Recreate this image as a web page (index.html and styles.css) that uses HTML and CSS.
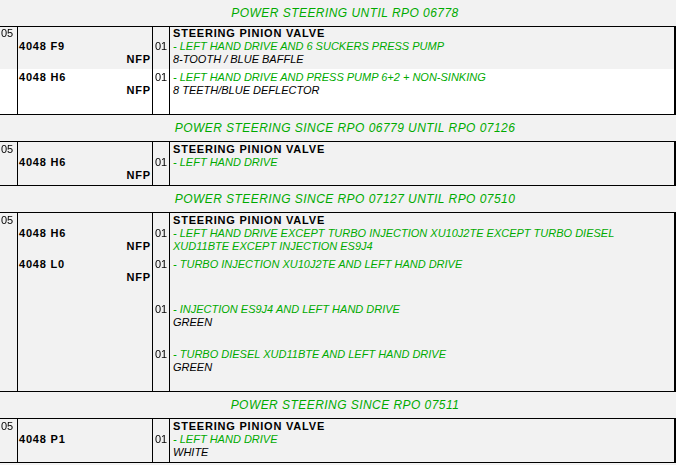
FILE: index.html
```html
<!DOCTYPE html>
<html>
<head>
<meta charset="utf-8">
<link rel="stylesheet" href="styles.css">
</head>
<body>
<div class="page">
  <div class="title">POWER STEERING UNTIL RPO 06778</div>
  <div class="tbl">
    <div class="row first short">
      <div class="c lvl"><div class="ln">05</div></div>
      <div class="c ref"><div class="ln"></div><div class="ln b">4048 F9</div><div class="ln b r">NFP</div></div>
      <div class="c qty"><div class="ln"></div><div class="ln">01</div></div>
      <div class="c desc"><div class="ln b">STEERING PINION VALVE</div><div class="ln g">- LEFT HAND DRIVE AND 6 SUCKERS PRESS PUMP</div><div class="ln k">8-TOOTH / BLUE BAFFLE</div></div>
    </div>
    <div class="row item white">
      <div class="c lvl"></div>
      <div class="c ref"><div class="ln b">4048 H6</div><div class="ln b r">NFP</div></div>
      <div class="c qty"><div class="ln">01</div></div>
      <div class="c desc"><div class="ln g">- LEFT HAND DRIVE AND PRESS PUMP 6+2 + NON-SINKING</div><div class="ln k">8 TEETH/BLUE DEFLECTOR</div></div>
    </div>
  </div>

  <div class="title">POWER STEERING SINCE RPO 06779 UNTIL RPO 07126</div>
  <div class="tbl">
    <div class="row first">
      <div class="c lvl"><div class="ln">05</div></div>
      <div class="c ref"><div class="ln"></div><div class="ln b">4048 H6</div><div class="ln b r">NFP</div></div>
      <div class="c qty"><div class="ln"></div><div class="ln">01</div></div>
      <div class="c desc"><div class="ln b">STEERING PINION VALVE</div><div class="ln g">- LEFT HAND DRIVE</div></div>
    </div>
  </div>

  <div class="title">POWER STEERING SINCE RPO 07127 UNTIL RPO 07510</div>
  <div class="tbl">
    <div class="row first">
      <div class="c lvl"><div class="ln">05</div></div>
      <div class="c ref"><div class="ln"></div><div class="ln b">4048 H6</div><div class="ln b r">NFP</div></div>
      <div class="c qty"><div class="ln"></div><div class="ln">01</div></div>
      <div class="c desc"><div class="ln b">STEERING PINION VALVE</div><div class="ln g">- LEFT HAND DRIVE EXCEPT TURBO INJECTION XU10J2TE EXCEPT TURBO DIESEL</div><div class="ln g">XUD11BTE EXCEPT INJECTION ES9J4</div></div>
    </div>
    <div class="row item">
      <div class="c lvl"></div>
      <div class="c ref"><div class="ln b">4048 L0</div><div class="ln b r">NFP</div></div>
      <div class="c qty"><div class="ln">01</div></div>
      <div class="c desc"><div class="ln g">- TURBO INJECTION XU10J2TE AND LEFT HAND DRIVE</div></div>
    </div>
    <div class="row item">
      <div class="c lvl"></div>
      <div class="c ref"></div>
      <div class="c qty"><div class="ln">01</div></div>
      <div class="c desc"><div class="ln g">- INJECTION ES9J4 AND LEFT HAND DRIVE</div><div class="ln k">GREEN</div></div>
    </div>
    <div class="row item">
      <div class="c lvl"></div>
      <div class="c ref"></div>
      <div class="c qty"><div class="ln">01</div></div>
      <div class="c desc"><div class="ln g">- TURBO DIESEL XUD11BTE AND LEFT HAND DRIVE</div><div class="ln k">GREEN</div></div>
    </div>
  </div>

  <div class="title">POWER STEERING SINCE RPO 07511</div>
  <div class="tbl">
    <div class="row first">
      <div class="c lvl"><div class="ln">05</div></div>
      <div class="c ref"><div class="ln"></div><div class="ln b">4048 P1</div></div>
      <div class="c qty"><div class="ln"></div><div class="ln">01</div></div>
      <div class="c desc"><div class="ln b">STEERING PINION VALVE</div><div class="ln g">- LEFT HAND DRIVE</div><div class="ln k">WHITE</div></div>
    </div>
  </div>
</div>
</body>
</html>
```

FILE: styles.css
```css
html, body {
  margin: 0;
  padding: 0;
  background: #f2f2f2;
}
body {
  font-family: "Liberation Sans", Arial, sans-serif;
  font-size: 11px;
  color: #000;
  overflow: hidden;
}
.page {
  width: 676px;
}
.title {
  height: 26px;
  box-sizing: border-box;
  padding: 7px 0 0 14px;
  line-height: 13px;
  font-size: 12px;
  font-style: italic;
  letter-spacing: 0.45px;
  color: #00aa00;
  text-align: center;
}
.tbl {
  border-top: 1px solid #000;
  border-bottom: 1px solid #000;
  border-right: 2px solid #000;
  background: #f2f2f2;
}
.row {
  display: grid;
  grid-template-columns: 17px 135px 17px 1fr;
}
.row.first {
  height: 43px;
}
.row.first .c {
  padding-top: 1px;
}
.row.first.short {
  height: 42px;
}
.row.first.short .c {
  padding-top: 0;
}
.row.item {
  height: 45px;
}
.row.item .c {
  padding-top: 2px;
}
.row.white {
  background: #fff;
}
.c {
  box-sizing: border-box;
  color: #000;
}
.c + .c {
  border-left: 1px solid #000;
}
.lvl {
  padding-left: 1px;
}
.ref {
  padding-left: 1px;
  padding-right: 1px;
}
.qty {
  padding-left: 2px;
}
.lvl .ln, .qty .ln {
  color: #000;
  will-change: transform;
}
.desc {
  padding-left: 3px;
}
.ln {
  height: 13px;
  line-height: 13px;
  white-space: nowrap;
}
.b {
  font-weight: bold;
  letter-spacing: 0.8px;
}
.r {
  text-align: right;
}
.g {
  color: #00aa00;
  font-style: italic;
}
.k {
  font-style: italic;
}
```
